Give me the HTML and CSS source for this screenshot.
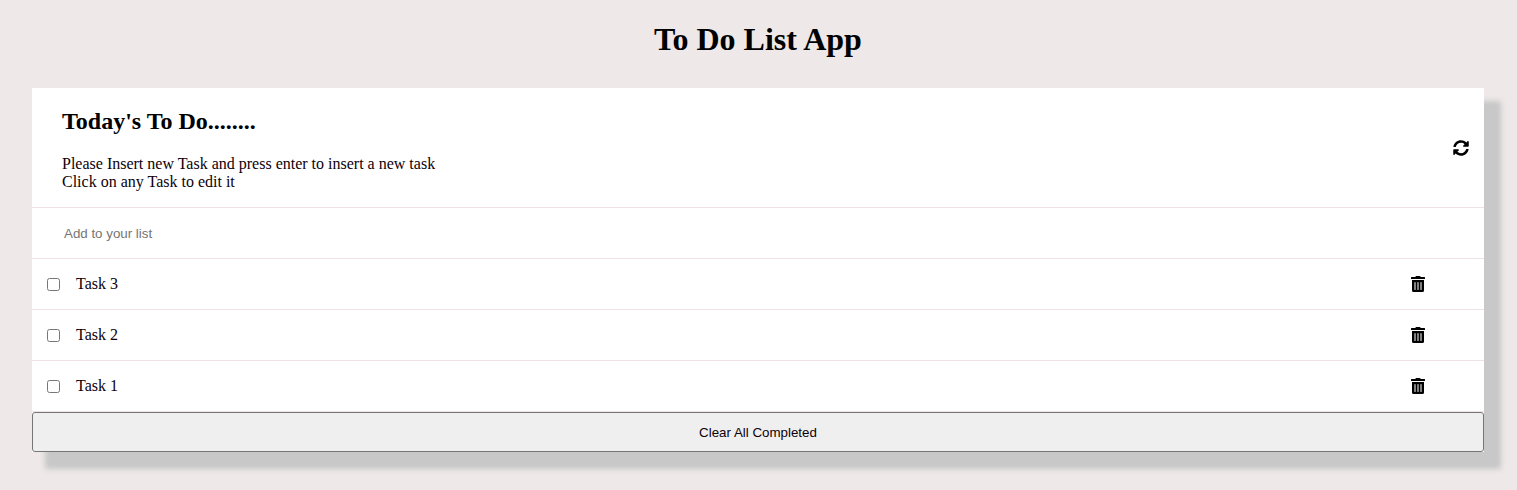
FILE: index.html
```html
<!DOCTYPE html>
<html lang="en">
<head>
<meta charset="utf-8">
<title>To Do List App</title>
<link rel="stylesheet" href="styles.css">
</head>
<body>
<svg class="sprite" aria-hidden="true">
  <symbol id="trash" viewBox="0 0 448 512"><path d="M32 464a48 48 0 0 0 48 48h288a48 48 0 0 0 48-48V128H32zm272-256a16 16 0 0 1 32 0v224a16 16 0 0 1-32 0zm-96 0a16 16 0 0 1 32 0v224a16 16 0 0 1-32 0zm-96 0a16 16 0 0 1 32 0v224a16 16 0 0 1-32 0zM432 32H312l-9.400-18.700A24 24 0 0 0 281.100 0H166.800a23.720 23.720 0 0 0-21.400 13.300L136 32H16A16 16 0 0 0 0 48v32a16 16 0 0 0 16 16h416a16 16 0 0 0 16-16V48a16 16 0 0 0-16-16z"/></symbol>
</svg>
<h1 class="title">To Do List App</h1>
<main class="todo">
  <header class="heading">
    <div class="intro">
      <h2 class="subtitle">Today's To Do........</h2>
      <p class="hint">Please Insert new Task and press enter to insert a new task<br>Click on any Task to edit it</p>
    </div>
    <svg class="refresh" viewBox="0 0 512 512"><path d="M370.720 133.280C339.458 104.008 298.888 87.962 255.848 88c-77.458.068-144.328 53.178-162.791 126.850-1.344 5.363-6.122 9.150-11.651 9.150H24.103c-7.498 0-13.194-6.807-11.807-14.176C33.933 94.924 134.813 8 256 8c66.448 0 126.791 26.136 171.315 68.685L463.030 40.970C478.149 25.851 504 36.559 504 57.941V192c0 13.255-10.745 24-24 24H345.941c-21.382 0-32.090-25.851-16.971-40.971l41.750-41.749zM32 296h134.059c21.382 0 32.090 25.851 16.971 40.971l-41.750 41.750c31.262 29.273 71.835 45.319 114.876 45.280 77.418-.070 144.315-53.144 162.787-126.849 1.344-5.363 6.122-9.150 11.651-9.150h57.304c7.498 0 13.194 6.807 11.807 14.176C478.067 417.076 377.187 504 256 504c-66.448 0-126.791-26.136-171.315-68.685L48.970 471.030C33.851 486.149 8 475.441 8 454.059V320c0-13.255 10.745-24 24-24z"/></svg>
  </header>
  <input class="entry" type="text" placeholder="Add to your list">
  <ul class="tasks">
    <li class="task"><input class="check" type="checkbox"><span class="name">Task 3</span><svg class="trash"><use href="#trash"/></svg></li>
    <li class="task"><input class="check" type="checkbox"><span class="name">Task 2</span><svg class="trash"><use href="#trash"/></svg></li>
    <li class="task"><input class="check" type="checkbox"><span class="name">Task 1</span><svg class="trash"><use href="#trash"/></svg></li>
  </ul>
  <button class="clear" type="button">Clear All Completed</button>
</main>
</body>
</html>
```
FILE: styles.css
```css
* { box-sizing: border-box; }
body {
  margin: 0;
  min-height: 490px;
  background: #eee8e8;
  color: #0d0009;
  font: 16px/18px "Liberation Serif", serif;
}
.sprite { display: none; }
.title {
  margin: 0;
  padding-top: 21px;
  width: 1516px;
  height: 88px;
  color: #000;
  font-size: 32px;
  line-height: 37px;
  text-align: center;
}
.todo {
  width: 1452px;
  margin-left: 32px;
  background: #fff;
  box-shadow: 15px 15px 5px 2px #c8c8c8;
}
.heading {
  display: flex;
  align-items: center;
  justify-content: space-between;
  height: 120px;
  padding: 0 15px 0 30px;
  border-bottom: 1px solid #eee2e6;
}
.intro { padding-top: 4px; }
.subtitle { margin: 0 0 20px; color: #000; font-size: 24px; line-height: 27px; }
.hint { margin: 0; }
.refresh { width: 16px; height: 16px; fill: #000; }
.entry {
  display: block;
  width: 100%;
  height: 51px;
  padding: 0 32px;
  border: 0;
  border-bottom: 1px solid #eee2e6;
  font: 13.333px "Liberation Sans", sans-serif;
}
.tasks { margin: 0; padding: 0; list-style: none; }
.task {
  display: flex;
  align-items: center;
  height: 51px;
  padding: 0 59px 0 15px;
  border-bottom: 1px solid #eee2e6;
}
.check { width: 13px; height: 13px; margin: 0 16px 0 0; }
.name { flex: 1; }
.trash { width: 14px; height: 16px; fill: #000; }
.clear {
  display: block;
  width: 100%;
  height: 40px;
  border: 1px solid #767676;
  border-radius: 3px;
  background: #efefef;
  color: #0d0009;
  font: 13.333px "Liberation Sans", sans-serif;
}
```
